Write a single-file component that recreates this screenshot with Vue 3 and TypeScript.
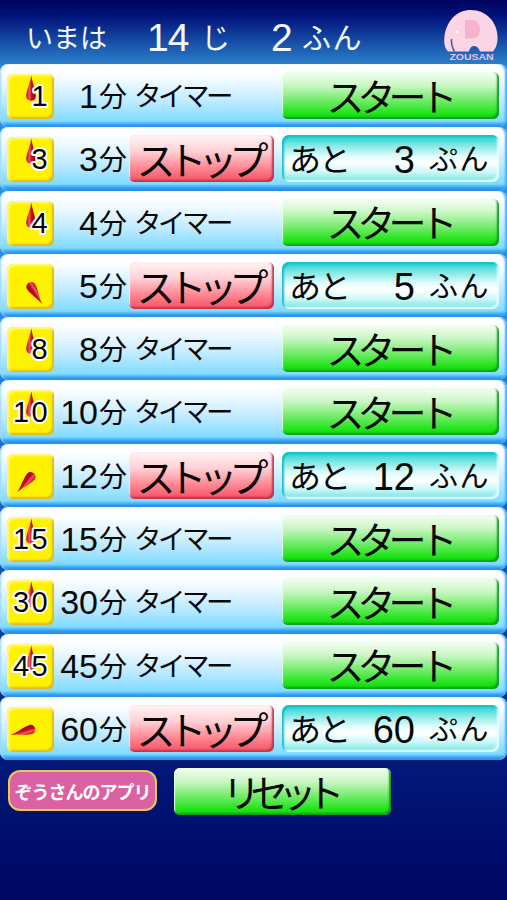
<script setup lang="ts">
interface Timer {
  minutes: number
  // Hand angle in degrees from 12 o'clock while the timer runs; null when idle
  angle: number | null
  unit: string
}

const timers: Timer[] = [
  { minutes: 1, angle: null, unit: 'ぷん' },
  { minutes: 3, angle: 0, unit: 'ぷん' },
  { minutes: 4, angle: null, unit: 'ぷん' },
  { minutes: 5, angle: 147, unit: 'ふん' },
  { minutes: 8, angle: null, unit: 'ぷん' },
  { minutes: 10, angle: null, unit: 'ぷん' },
  { minutes: 12, angle: 220, unit: 'ふん' },
  { minutes: 15, angle: null, unit: 'ふん' },
  { minutes: 30, angle: null, unit: 'ぷん' },
  { minutes: 45, angle: null, unit: 'ふん' },
  { minutes: 60, angle: 254, unit: 'ぷん' },
]

const handTransform = (t: Timer): string => `rotate(${t.angle ?? 0} 24 22.5)`
const showsNumber = (t: Timer): boolean => !t.angle
</script>

<template>
  <main class="screen">
    <header class="clock">
      <span class="now">いまは</span>
      <span class="num hour">14</span>
      <span class="unit ji">じ</span>
      <span class="num minute">2</span>
      <span class="unit fun">ふん</span>
      <svg class="logo" viewBox="0 0 56 54">
        <path d="M5 41.500C1 37 1 32 1.500 26C4 10 14 0 28 0C43 0 54 12 54.500 26C55 33 53 38 50 41.500H37C36 38 33.500 36 31 36C28 36 26.500 39 26 41.500Z" fill="#fbd5e3" />
        <path d="M22 10H29C34 10 37 14 37 19C37 25 34 28.500 29 28.500H22Z" fill="#f5b3ce" />
        <circle cx="14" cy="22" r="1.500" fill="#fff" />
        <path d="M8.500 29C8 34 9 37 11.500 41.500" fill="none" stroke="#2c5fae" stroke-width="1.500" />
        <text x="6.500" y="49.500" textLength="44" lengthAdjust="spacingAndGlyphs" class="brand">ZOUSAN</text>
      </svg>
    </header>

    <section class="list">
      <article v-for="t in timers" :key="t.minutes" class="row">
        <svg class="dial" viewBox="0 0 47 45">
          <defs>
            <linearGradient :id="`hand${t.minutes}`" x1="0" x2="1">
              <stop offset="0" stop-color="#c4101c" />
              <stop offset=".35" stop-color="#e8565c" />
              <stop offset=".55" stop-color="#cc0d1a" />
              <stop offset="1" stop-color="#98000c" />
            </linearGradient>
          </defs>
          <path
            d="M24.300 1.500C25.500 9 28.800 17 28.800 22.500C28.300 28.300 19.700 28.300 19.200 22.500C19.200 17 23 9 24.300 1.500Z"
            :fill="`url(#hand${t.minutes})`"
            :transform="handTransform(t)"
          />
          <template v-if="showsNumber(t)">
            <text
              v-for="(d, i) in String(t.minutes)"
              :key="i"
              :x="t.minutes < 10 || i === 1 ? 32.500 : 14"
              y="31.500"
              class="digit"
            >{{ d }}</text>
          </template>
        </svg>
        <span class="minutes">{{ t.minutes }}</span>
        <span class="kanji">分</span>
        <button v-if="t.angle !== null" class="btn stop"><span class="glyphs">ストップ</span></button>
        <span v-else class="name"><span class="glyphs">タイマー</span></span>
        <div v-if="t.angle !== null" class="remaining">
          <span class="ato">あと</span>
          <span class="left">{{ t.minutes }}</span>
          <span class="pun">{{ t.unit }}</span>
        </div>
        <button v-else class="btn start"><span class="glyphs">スタート</span></button>
      </article>
    </section>

    <footer class="footer">
      <button class="apps"><span>ぞうさんのアプリ</span></button>
      <button class="btn reset"><span class="glyphs">リセット</span></button>
    </footer>
  </main>
</template>

<style>
body {
  margin: 0;
  background: #000c66;
}
</style>

<style scoped>
.screen {
  width: 507px;
  height: 900px;
  overflow: hidden;
  background: linear-gradient(#000460 0, #00127a 16px, #2a80cb 64px, #2f94e4 150px, #2a8ae0 330px, #1c5fbd 520px, #0b2a88 700px, #021878 765px, #000866 880px);
  font-family: "Liberation Sans", "Noto Sans CJK JP", sans-serif;
  color: #080808;
}
.screen span {
  white-space: nowrap;
}
button {
  padding: 0;
  border: 0;
  color: inherit;
  font-family: inherit;
}
.clock {
  box-sizing: border-box;
  height: 64px;
  padding: 10px 8px 0 26px;
  display: flex;
  color: #f4f8ff;
  line-height: 58px;
}
.now {
  width: 121px;
  font-size: 27px;
}
.num {
  font-size: 39px;
  line-height: 56px;
}
.hour {
  width: 54px;
  letter-spacing: -1px;
}
.ji {
  width: 70px;
}
.unit {
  font-size: 29px;
}
.minute {
  width: 31px;
}
.fun {
  letter-spacing: 1.500px;
}
.logo {
  width: 56px;
  height: 54px;
  margin-left: auto;
}
.brand {
  fill: #f0bfe0;
  font: bold 9px "Liberation Sans", sans-serif;
}
.row {
  box-sizing: border-box;
  height: 63.300px;
  padding: 8px 8px 0 7px;
  display: flex;
  border-radius: 8px;
  background: linear-gradient(#fff 0, #fafdff 12px, #bdeaff 38px, #7fdbff 57px, #55baf7 59px, #309bf0 61px, #2588e8 100%);
  box-shadow: inset -3px 0 2px -1px #49aef5, inset 2px 0 2px -1px #9ad9fc;
}
.dial {
  flex: none;
  width: 47px;
  height: 45px;
  margin-top: 2px;
  border-radius: 6px;
  background: #fff200;
  box-shadow: inset 2px 2px 2px #fff887, inset -2px -2px 2px #dcb92a, 0 0 1px #e3c95f;
}
.digit {
  font: 29px "Liberation Sans", sans-serif;
  text-anchor: middle;
  fill: #050505;
  stroke: #fff;
  stroke-width: 4px;
  stroke-linejoin: round;
  paint-order: stroke;
}
.minutes {
  width: 44px;
  font-size: 34px;
  line-height: 48px;
  text-align: right;
}
.kanji {
  width: 25px;
  padding-left: 1px;
  box-sizing: border-box;
  font: 28px/46px "Noto Sans CJK JP", sans-serif;
}
.btn {
  display: flex;
  align-items: center;
  justify-content: center;
  height: 47px;
  border-radius: 6px;
  line-height: 47px;
}
.glyphs {
  display: inline-block;
  font-family: "Noto Sans CJK JP", sans-serif;
}
.stop {
  width: 145px;
  margin-left: 6px;
  background: linear-gradient(#fff4f5 0, #ffd0d5 35%, #fd8692 70%, #f94f62);
  box-shadow: inset -2px -2px 2px #c3344a, inset 1px 1px 1px #ffe9ec;
}
.stop .glyphs {
  margin-right: 6px;
  font-size: 39px;
  letter-spacing: -8px;
}
.name {
  width: 151px;
  line-height: 45px;
}
.name .glyphs {
  margin-left: 11px;
  font-size: 27.500px;
  letter-spacing: -3.500px;
}
.start,
.reset {
  width: 217px;
  background: linear-gradient(#f4fff2 0, #cbf7c6 28%, #6eea65 62%, #12e30d 92%);
  box-shadow: inset -2px -2px 2px #149a22, inset 1px 1px 1px #e7ffe4;
}
.start {
  margin-left: 8px;
}
.start .glyphs {
  margin: 0 4px 3px 0;
  font-size: 38px;
  letter-spacing: -7px;
}
.remaining {
  box-sizing: border-box;
  width: 217px;
  height: 47px;
  margin-left: 8px;
  padding-left: 7px;
  display: flex;
  border-radius: 7px;
  background: linear-gradient(#15cfce 0, #7be5e3 20%, #e1fcfb 45%, #fff 60%, #c7f8f7 80%, #6ce0e0);
  box-shadow: inset 2px 2px 2px #18bfc7, inset -2px -2px 2px #e5ffff;
  line-height: 51px;
}
.ato {
  width: 65px;
  font-size: 32px;
  letter-spacing: -2px;
}
.left {
  width: 61px;
  font-size: 38px;
  line-height: 50px;
  text-align: right;
}
.pun {
  margin-left: 14px;
  font-size: 29px;
  letter-spacing: 1.500px;
}
.footer {
  display: flex;
  padding: 8px 0 0 8px;
}
.apps {
  box-sizing: border-box;
  width: 149px;
  height: 41px;
  margin-top: 2px;
  border: 2px solid #eac94e;
  border-radius: 12px;
  background: #da62a2;
  color: #fff;
  font: bold 18px/34px "Noto Sans CJK JP", sans-serif;
  letter-spacing: -1px;
}
.reset {
  margin-left: 17px;
}
.reset .glyphs {
  margin: 0 8px 3px 0;
  font-size: 38px;
  letter-spacing: -10px;
}
</style>
